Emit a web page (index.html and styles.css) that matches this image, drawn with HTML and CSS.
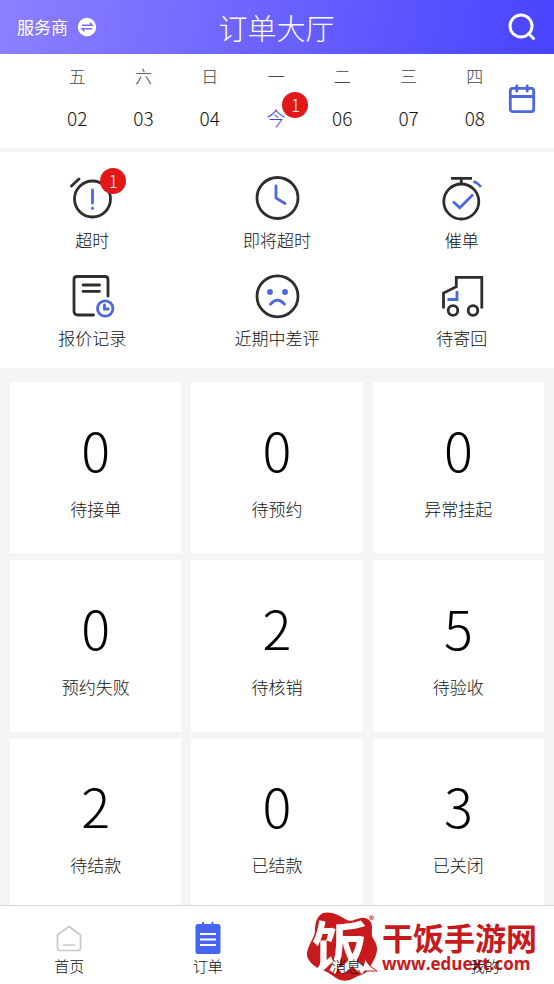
FILE: index.html
```html
<!DOCTYPE html>
<html lang="zh-CN">
<head>
  <meta charset="UTF-8">
  <meta name="viewport" content="width=device-width, initial-scale=1">
  <title>订单大厅</title>
  <link rel="stylesheet" href="styles.css">
</head>
<body>
  <div class="app">
    <!-- Header -->
    <header class="header">
      <button class="role-switch" type="button">
        服务商
        <svg width="20" height="20" viewBox="0 0 20 20" aria-hidden="true">
          <circle cx="10" cy="10" r="9.2" fill="#fff"/>
          <path d="M5 8.3h10l-2.4-2.6M15 11.7H5l2.4 2.6" fill="none" stroke="#7a6cfa" stroke-width="1.5"/>
        </svg>
      </button>
      <h1 class="title">订单大厅</h1>
      <button class="search" type="button" aria-label="搜索">
        <svg width="28" height="28" viewBox="0 0 28 28" fill="none" stroke="#fff" stroke-width="3" stroke-linecap="round">
          <circle cx="13" cy="13" r="11"/>
          <path d="M20.5 20.5l5 5"/>
        </svg>
      </button>
    </header>

    <main class="main">
      <!-- Week strip -->
      <section class="week">
        <div class="days">
          <a class="day" href="#"><span class="name">五</span><span class="date">02</span></a>
          <a class="day" href="#"><span class="name">六</span><span class="date">03</span></a>
          <a class="day" href="#"><span class="name">日</span><span class="date">04</span></a>
          <a class="day today" href="#"><span class="name">一</span><span class="date">今<span class="badge">1</span></span></a>
          <a class="day" href="#"><span class="name">二</span><span class="date">06</span></a>
          <a class="day" href="#"><span class="name">三</span><span class="date">07</span></a>
          <a class="day" href="#"><span class="name">四</span><span class="date">08</span></a>
        </div>
        <button class="calendar" type="button" aria-label="日历">
          <svg width="28" height="30" viewBox="0 0 28 30" fill="none" stroke="#4c68dc" stroke-width="2.8" stroke-linecap="round">
            <rect x="2.3" y="4.3" width="23.4" height="23.4" rx="2.5"/>
            <path d="M2.3 12.5h23.4M8.8 1.8v5.4M19.2 1.8v5.4"/>
          </svg>
        </button>
      </section>

      <!-- Shortcuts -->
      <section class="shortcuts">
        <a class="shortcut" href="#">
          <span class="icon">
            <svg width="48" height="48" viewBox="0 0 48 48" fill="none" stroke="#2e2e2e" stroke-width="2.8" stroke-linecap="round">
              <circle cx="24.5" cy="25" r="18"/>
              <path d="M3.5 12l7.5-7"/>
              <path d="M24.5 16v13M24.5 34.2v.4" stroke="#4c68dc"/>
            </svg>
            <span class="badge">1</span>
          </span>
          <span>超时</span>
        </a>
        <a class="shortcut" href="#">
          <span class="icon">
            <svg width="48" height="48" viewBox="0 0 48 48" fill="none" stroke="#2e2e2e" stroke-width="2.8" stroke-linecap="round">
              <circle cx="24.5" cy="24" r="20.5"/>
              <path d="M23 12v12l9 5.5" stroke="#4c68dc"/>
            </svg>
          </span>
          <span>即将超时</span>
        </a>
        <a class="shortcut" href="#">
          <span class="icon">
            <svg width="48" height="48" viewBox="0 0 48 48" fill="none" stroke="#2e2e2e" stroke-width="2.8">
              <circle cx="23.3" cy="27.5" r="17.5"/>
              <path d="M13 4.3h21M23.3 4.3v5.7"/>
              <path d="M15 27.5l6.8 6.3L35 20.5M35.5 7.3q4.5 1.8 7.5 5.6" stroke="#4c68dc"/>
            </svg>
          </span>
          <span>催单</span>
        </a>
        <a class="shortcut" href="#">
          <span class="icon">
            <svg width="48" height="48" viewBox="0 0 48 48" fill="none" stroke="#2e2e2e" stroke-width="2.8" stroke-linecap="round">
              <path d="M40 24V7.5q0-3-3-3H9q-3 0-3 3V39q0 4 4 4h15.5M15 13h16.5M15 19.3h16.5"/>
              <circle cx="37.2" cy="36.5" r="7.7" stroke="#4c68dc"/>
              <path d="M36.5 33v4h3.8" stroke="#4c68dc"/>
            </svg>
          </span>
          <span>报价记录</span>
        </a>
        <a class="shortcut" href="#">
          <span class="icon">
            <svg width="48" height="48" viewBox="0 0 48 48" fill="none" stroke="#2e2e2e" stroke-width="2.8" stroke-linecap="round">
              <circle cx="24.5" cy="24.3" r="20.5"/>
              <path d="M17.5 32.2q7-8 14 0" stroke="#4c68dc"/>
              <g fill="#4c68dc" stroke="none"><circle cx="17" cy="20" r="2.9"/><circle cx="32" cy="20" r="2.9"/></g>
            </svg>
          </span>
          <span>近期中差评</span>
        </a>
        <a class="shortcut" href="#">
          <span class="icon">
            <svg width="48" height="48" viewBox="0 0 48 48" fill="none" stroke="#2e2e2e" stroke-width="2.8">
              <path d="M5.5 36.5V21l12.8-6.3V5.3h25.5v31.2"/>
              <circle cx="15" cy="38.5" r="4.8"/>
              <circle cx="35" cy="38.5" r="4.8"/>
              <path d="M19 19v8.5H9.5" stroke="#4c68dc"/>
            </svg>
          </span>
          <span>待寄回</span>
        </a>
      </section>

      <!-- Order counts -->
      <section class="cards">
        <a class="card" href="#"><span class="num">0</span><span>待接单</span></a>
        <a class="card" href="#"><span class="num">0</span><span>待预约</span></a>
        <a class="card" href="#"><span class="num">0</span><span>异常挂起</span></a>
        <a class="card" href="#"><span class="num">0</span><span>预约失败</span></a>
        <a class="card" href="#"><span class="num">2</span><span>待核销</span></a>
        <a class="card" href="#"><span class="num">5</span><span>待验收</span></a>
        <a class="card" href="#"><span class="num">2</span><span>待结款</span></a>
        <a class="card" href="#"><span class="num">0</span><span>已结款</span></a>
        <a class="card" href="#"><span class="num">3</span><span>已关闭</span></a>
      </section>
    </main>

    <!-- Bottom tabs -->
    <nav class="tabs">
      <a class="tab" href="#">
        <svg width="28" height="34" viewBox="0 0 28 34" fill="none" stroke="#c8c8c8" stroke-width="1.7" stroke-linejoin="round" stroke-linecap="round">
          <path d="M2.5 14L14 5.5 25.5 14v13q0 2.5-2.5 2.5H5q-2.5 0-2.5-2.5zM8.5 24h11"/>
        </svg>
        <span class="label">首页</span>
      </a>
      <a class="tab" href="#">
        <svg width="28" height="34" viewBox="0 0 28 34">
          <rect x="1.5" y="3" width="25" height="30" rx="2.5" fill="#4664f5"/>
          <path d="M9 1v5M18.5 1v5" stroke="#4664f5" stroke-width="2"/>
          <path d="M6 13h16M6 18.5h16M6 24h16" stroke="#fff" stroke-width="2.2"/>
        </svg>
        <span class="label">订单</span>
      </a>
      <a class="tab" href="#">
        <svg width="28" height="34" viewBox="0 0 28 34"></svg>
        <span class="label">消息</span>
      </a>
      <a class="tab" href="#">
        <svg width="28" height="34" viewBox="0 0 28 34"></svg>
        <span class="label">我的</span>
      </a>
      <div class="brand">
        <svg class="brand-logo" width="74" height="70" viewBox="0 0 74 70">
          <path d="M17 1C25-1 33 3 39 7s10 0 16-1 11 3 11 9-1 8 2 13 4 9 2 15-5 9-7 14-10 6-15 9-12 4-18 0-8-6-14-8S0 49 1 41 9 25 9 19 10 4 17 1z" fill="#c81a1c"/>
          <path d="M59 47q4 8 12 12H56z" fill="#fff" stroke="#c81a1c"/>
          <text class="brand-mark" x="6" y="56">饭</text>
        </svg>
        <div class="brand-text">
          <span class="brand-name">干饭手游网</span>
          <span class="brand-url">www.eduext.com</span>
        </div>
        <span class="reg">®</span>
      </div>
    </nav>
  </div>
</body>
</html>
```
FILE: styles.css
```css
* {
  box-sizing: border-box;
}

body {
  margin: 0;
  font-family: "Noto Sans CJK SC", sans-serif;
  font-weight: 300;
  font-size: 17px;
  line-height: 24px;
  color: #111;
  background: #f5f5f5;
}

a {
  color: inherit;
  text-decoration: none;
}

button {
  padding: 0;
  border: none;
  background: none;
  font: inherit;
  color: inherit;
  cursor: pointer;
}

svg {
  display: block;
}

.app {
  display: flex;
  flex-direction: column;
  height: 100vh;
}

/* Header */
.header {
  display: grid;
  grid-template-columns: 1fr auto 1fr;
  align-items: center;
  flex: none;
  height: 54px;
  padding: 0 18px 0 17px;
  color: #fff;
  background: linear-gradient(100deg, #8c80ff, #4843ff);
}

.role-switch {
  display: flex;
  align-items: center;
  gap: 9px;
  font-weight: 400;
}

.title {
  margin: 0;
  font-size: 29px;
  font-weight: 300;
  line-height: 40px;
}

.search {
  justify-self: end;
}

.main {
  flex: 1;
  min-height: 0;
  overflow-y: auto;
  scrollbar-width: none;
}

/* Week strip */
.week {
  display: flex;
  align-items: center;
  height: 98px;
  padding: 0 18px 4px 44px;
  background: #fff;
  border-bottom: 4px solid #f5f5f5;
}

.days {
  display: flex;
  flex: 1;
}

.day {
  display: flex;
  flex: 1;
  flex-direction: column;
  align-items: center;
  gap: 18px;
  padding-bottom: 4px;
}

.name {
  color: #444;
}

.date {
  position: relative;
  font-size: 19px;
}

.today .date {
  color: #4843d8;
}

.badge {
  position: absolute;
  top: -14px;
  left: 16px;
  width: 26px;
  height: 26px;
  border-radius: 50%;
  background: #e01818;
  color: #fff;
  font-size: 17px;
  line-height: 26px;
  text-align: center;
}

/* Shortcuts */
.shortcuts {
  display: grid;
  grid-template-columns: repeat(3, 1fr);
  row-gap: 20px;
  padding: 22px 0 18px;
  background: #fff;
}

.shortcut {
  display: flex;
  flex-direction: column;
  align-items: center;
  gap: 6px;
}

.icon {
  position: relative;
}

.icon .badge {
  top: -6px;
  left: 32px;
}

/* Order counts */
.cards {
  display: grid;
  grid-template-columns: repeat(3, 1fr);
  gap: 7px 10px;
  padding: 14px 10px;
}

.card {
  display: flex;
  flex-direction: column;
  align-items: center;
  justify-content: center;
  gap: 18px;
  padding-top: 4px;
  aspect-ratio: 1;
  background: #fff;
}

.num {
  color: #000;
  font-size: 54px;
  line-height: 60px;
}

/* Bottom tabs */
.tabs {
  position: relative;
  display: flex;
  flex: none;
  height: 79px;
  padding-top: 15px;
  background: #fff;
  border-top: 1px solid #d8d8d8;
}

.tab {
  display: flex;
  flex: 1;
  flex-direction: column;
  align-items: center;
  font-size: 15px;
  line-height: 22px;
}

.label {
  position: relative;
  z-index: 2;
}

/* Brand stamp over the tabs */
.brand {
  position: absolute;
  top: 6px;
  right: 17px;
  display: flex;
  gap: 2px;
  color: #c81a1c;
  font-weight: 700;
  pointer-events: none;
}

.brand-logo {
  overflow: visible;
}

.brand-mark {
  fill: #fff;
  font-size: 56px;
  font-weight: 700;
}

.brand-text {
  display: flex;
  flex-direction: column;
  padding-top: 8px;
}

.brand-name {
  font-size: 31px;
  line-height: 34px;
}

.brand-url {
  font-family: "Open Sans", sans-serif;
  font-size: 17px;
  line-height: 20px;
}

.reg {
  position: absolute;
  top: 1px;
  left: 63px;
  font-size: 10px;
  line-height: 14px;
}
```
